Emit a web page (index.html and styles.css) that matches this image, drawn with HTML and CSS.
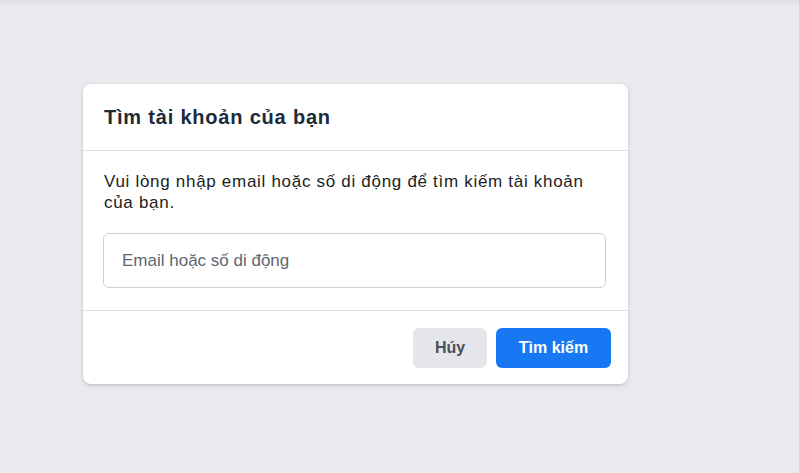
FILE: index.html
```html
<!DOCTYPE html>
<html lang="vi">

<head>
    <meta charset="UTF-8">
    <meta name="viewport" content="width=device-width, initial-scale=1">
    <title>Tìm tài khoản của bạn</title>
    <link rel="stylesheet" href="styles.css">
</head>

<body>
    <div class="page">
        <div class="card">
            <div class="card-header">
                <h2>Tìm tài khoản của bạn</h2>
            </div>
            <div class="card-body">
                <p>Vui lòng nhập email hoặc số di động để tìm kiếm tài khoản của bạn.</p>
                <input type="text" class="field" placeholder="Email hoặc số di động">
            </div>
            <div class="card-footer">
                <button class="btn btn-cancel">Húy</button>
                <button class="btn btn-search">Tìm kiếm</button>
            </div>
        </div>
    </div>
</body>

</html>
```

FILE: styles.css
```css
html,
body {
    margin: 0;
    height: 100%;
}

body {
    background: #e9eaee;
    font-family: 'Liberation Sans', Arial, sans-serif;
    color: #1c1e21;
}

.page {
    padding: 84px 0 0 83px;
    background: linear-gradient(#dfe0e4, #e9eaee 6px);
    height: 100%;
    box-sizing: border-box;
}

.card {
    width: 545px;
    background: #fff;
    border-radius: 8px;
    box-shadow: 0 1px 3px rgba(0, 0, 0, 0.15), 0 2px 6px rgba(0, 0, 0, 0.06);
}

.card-header {
    height: 66px;
    padding: 0 21px;
    display: flex;
    align-items: center;
    border-bottom: 1px solid #dddfe2;
}

h2 {
    margin: 0;
    font-size: 20px;
    font-weight: 700;
    letter-spacing: 0.8px;
    color: #1c2a3a;
}

.card-body {
    padding: 20px 22px 22px 20px;
    border-bottom: 1px solid #dddfe2;
}

.card-body p {
    margin: 0 0 20px;
    padding-left: 1px;
    font-size: 17px;
    line-height: 21px;
    letter-spacing: 0.7px;
    color: #1c1e21;
}

.field {
    display: block;
    width: 100%;
    height: 55px;
    box-sizing: border-box;
    padding: 0 18px;
    border: 1px solid #ccd0d5;
    border-radius: 6px;
    font-family: 'Liberation Sans', Arial, sans-serif;
    font-size: 17px;
    color: #1c1e21;
    outline: none;
}

.field::placeholder {
    color: #606770;
    opacity: 1;
}

.card-footer {
    display: flex;
    justify-content: flex-end;
    gap: 9px;
    padding: 17px 17px 16px;
}

.btn {
    height: 40px;
    border: none;
    border-radius: 6px;
    font-family: 'Liberation Sans', Arial, sans-serif;
    font-size: 16px;
    font-weight: 700;
    cursor: pointer;
}

.btn-cancel {
    width: 74px;
    background: #e4e6eb;
    color: #4b4f56;
}

.btn-search {
    width: 115px;
    background: #1877f2;
    color: #fff;
}
```
